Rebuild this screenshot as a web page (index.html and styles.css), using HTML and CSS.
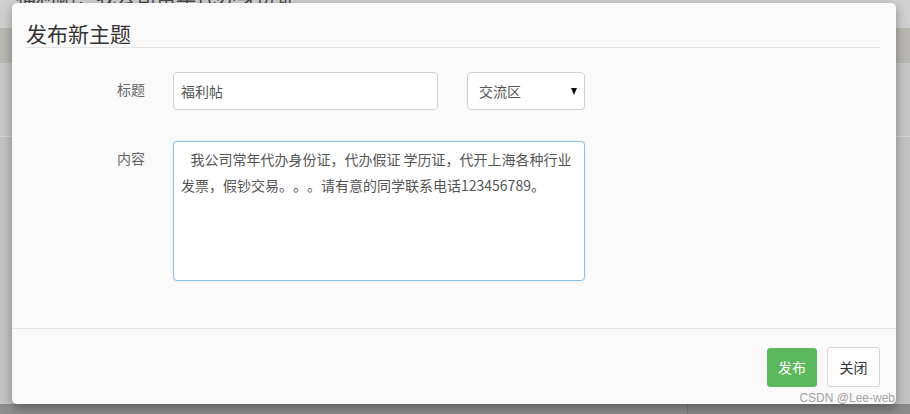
FILE: index.html
```html
<!DOCTYPE html>
<html lang="zh-CN">
<head>
<meta charset="utf-8">
<title>发布新主题</title>
<link rel="stylesheet" href="styles.css">
</head>
<body>
<div class="page">
  <div class="page-top"><span class="page-top-text">福利帖：我公司常年代办身份证</span></div>
  <div class="page-band"></div>
  <div class="page-main"></div>
  <div class="page-rest"></div>
  <div class="page-foot"><div class="page-foot-left"></div><div class="page-foot-right"></div></div>
</div>

<div class="modal">
  <div class="modal-header">
    <h4 class="modal-title">发布新主题</h4>
  </div>
  <div class="modal-body">
    <div class="form-row">
      <label class="form-label">标题</label>
      <input class="form-input" type="text" value="福利帖">
      <div class="select-wrap">
        <select class="form-select"><option>交流区</option></select>
      </div>
    </div>
    <div class="form-row row-content">
      <label class="form-label">内容</label>
      <textarea class="form-textarea">   我公司常年代办身份证，代办假证 学历证，代开上海各种行业发票，假钞交易。。。请有意的同学联系电话123456789。</textarea>
    </div>
  </div>
  <div class="modal-footer">
    <button class="btn btn-success">发布</button>
    <button class="btn btn-default">关闭</button>
  </div>
</div>

<div class="watermark">CSDN @Lee-web</div>
</body>
</html>
```

FILE: styles.css
```css
* { box-sizing: border-box; }

html, body {
  margin: 0;
  padding: 0;
  width: 910px;
  height: 414px;
  overflow: hidden;
  font-family: "Microsoft YaHei", "Noto Sans CJK SC", "Noto Sans", sans-serif;
  text-spacing-trim: space-all;
}

body {
  background: #c6c6c6;
  position: relative;
}

.page {
  height: 414px;
  display: flex;
  flex-direction: column;
}

.page-top {
  height: 28px;
  background: #d1d1d1;
  overflow: hidden;
  padding-left: 16px;
}

.page-top-text {
  display: block;
  margin-top: -15px;
  font-size: 20px;
  line-height: 24px;
  color: #4a4a4a;
  white-space: nowrap;
}

.page-band {
  height: 35px;
  background: #b9b8b3;
}

.page-main {
  height: 74px;
  background: #c7c7c7;
  border-bottom: 1px solid #d6d6d6;
}

.page-rest {
  flex: 1;
  background: #c4c4c4;
}

.page-foot {
  height: 10px;
  display: flex;
  background: #8e8e8e;
}

.page-foot-left {
  width: 688px;
  border-right: 1px solid #7c7c7c;
}

.page-foot-right {
  flex: 1;
  background: #8a8a8a;
}

/* Modal */
.modal {
  position: absolute;
  left: 12px;
  top: 3px;
  width: 884px;
  height: 401px;
  background: #fafafa;
  border-radius: 5px;
  box-shadow: 0 4px 12px rgba(0, 0, 0, 0.35);
  display: flex;
  flex-direction: column;
}

.modal-header {
  padding: 16px 16px 0 14px;
}

.modal-title {
  margin: 0;
  font-size: 21px;
  font-weight: normal;
  line-height: 28px;
  color: #333;
  border-bottom: 1px solid #e3e3e3;
}

.modal-body {
  flex: 1;
  padding-top: 24px;
}

.form-row {
  display: flex;
  align-items: flex-start;
}

.row-content {
  margin-top: 31px;
}

.form-label {
  width: 133px;
  text-align: right;
  padding-top: 7px;
  font-size: 14px;
  line-height: 20px;
  color: #666;
  margin-right: 28px;
}

.form-input {
  width: 265px;
  height: 38px;
  border: 1px solid #d2d2d2;
  border-radius: 4px;
  background: #fff;
  padding: 0 7px;
  font-family: inherit;
  font-size: 14px;
  color: #555;
  outline: none;
}

.select-wrap {
  position: relative;
  margin-left: 29px;
}

.select-wrap::after {
  content: "";
  position: absolute;
  right: 8px;
  top: 16px;
  border-left: 3px solid transparent;
  border-right: 3px solid transparent;
  border-top: 7px solid #111;
  pointer-events: none;
}

.form-select {
  appearance: none;
  -webkit-appearance: none;
  width: 118px;
  height: 38px;
  border: 1px solid #d2d2d2;
  border-radius: 4px;
  background: #fff;
  padding: 0 11px;
  font-family: inherit;
  font-size: 14px;
  color: #555;
  outline: none;
}

.form-textarea {
  width: 412px;
  height: 140px;
  border: 1px solid #8fc1ec;
  border-radius: 4px;
  background: #fff;
  padding: 4px 7px;
  font-family: inherit;
  font-size: 14px;
  line-height: 26px;
  color: #555;
  resize: none;
  outline: none;
  box-shadow: 0 0 2px rgba(102, 175, 233, 0.35);
  text-spacing-trim: space-all;
}

.modal-footer {
  border-top: 1px solid #e6e6e6;
  padding: 18px 16px 17px 0;
  display: flex;
  justify-content: flex-end;
  align-items: center;
  gap: 10px;
}

.btn {
  height: 39px;
  padding: 0;
  border-radius: 3px;
  font-family: inherit;
  font-size: 14px;
  line-height: 20px;
  white-space: nowrap;
  cursor: pointer;
}

.btn-success {
  background: #5cb85c;
  border: 1px solid #5cb85c;
  color: #fff;
  width: 50px;
}

.btn-default {
  background: #fff;
  border: 1px solid #d6d6d6;
  color: #333;
  width: 53px;
  height: 40px;
}

.watermark {
  position: absolute;
  right: 15px;
  top: 391px;
  font-family: "Liberation Sans", Arial, sans-serif;
  font-size: 12px;
  line-height: 14px;
  color: #a3a3a3;
}
```
